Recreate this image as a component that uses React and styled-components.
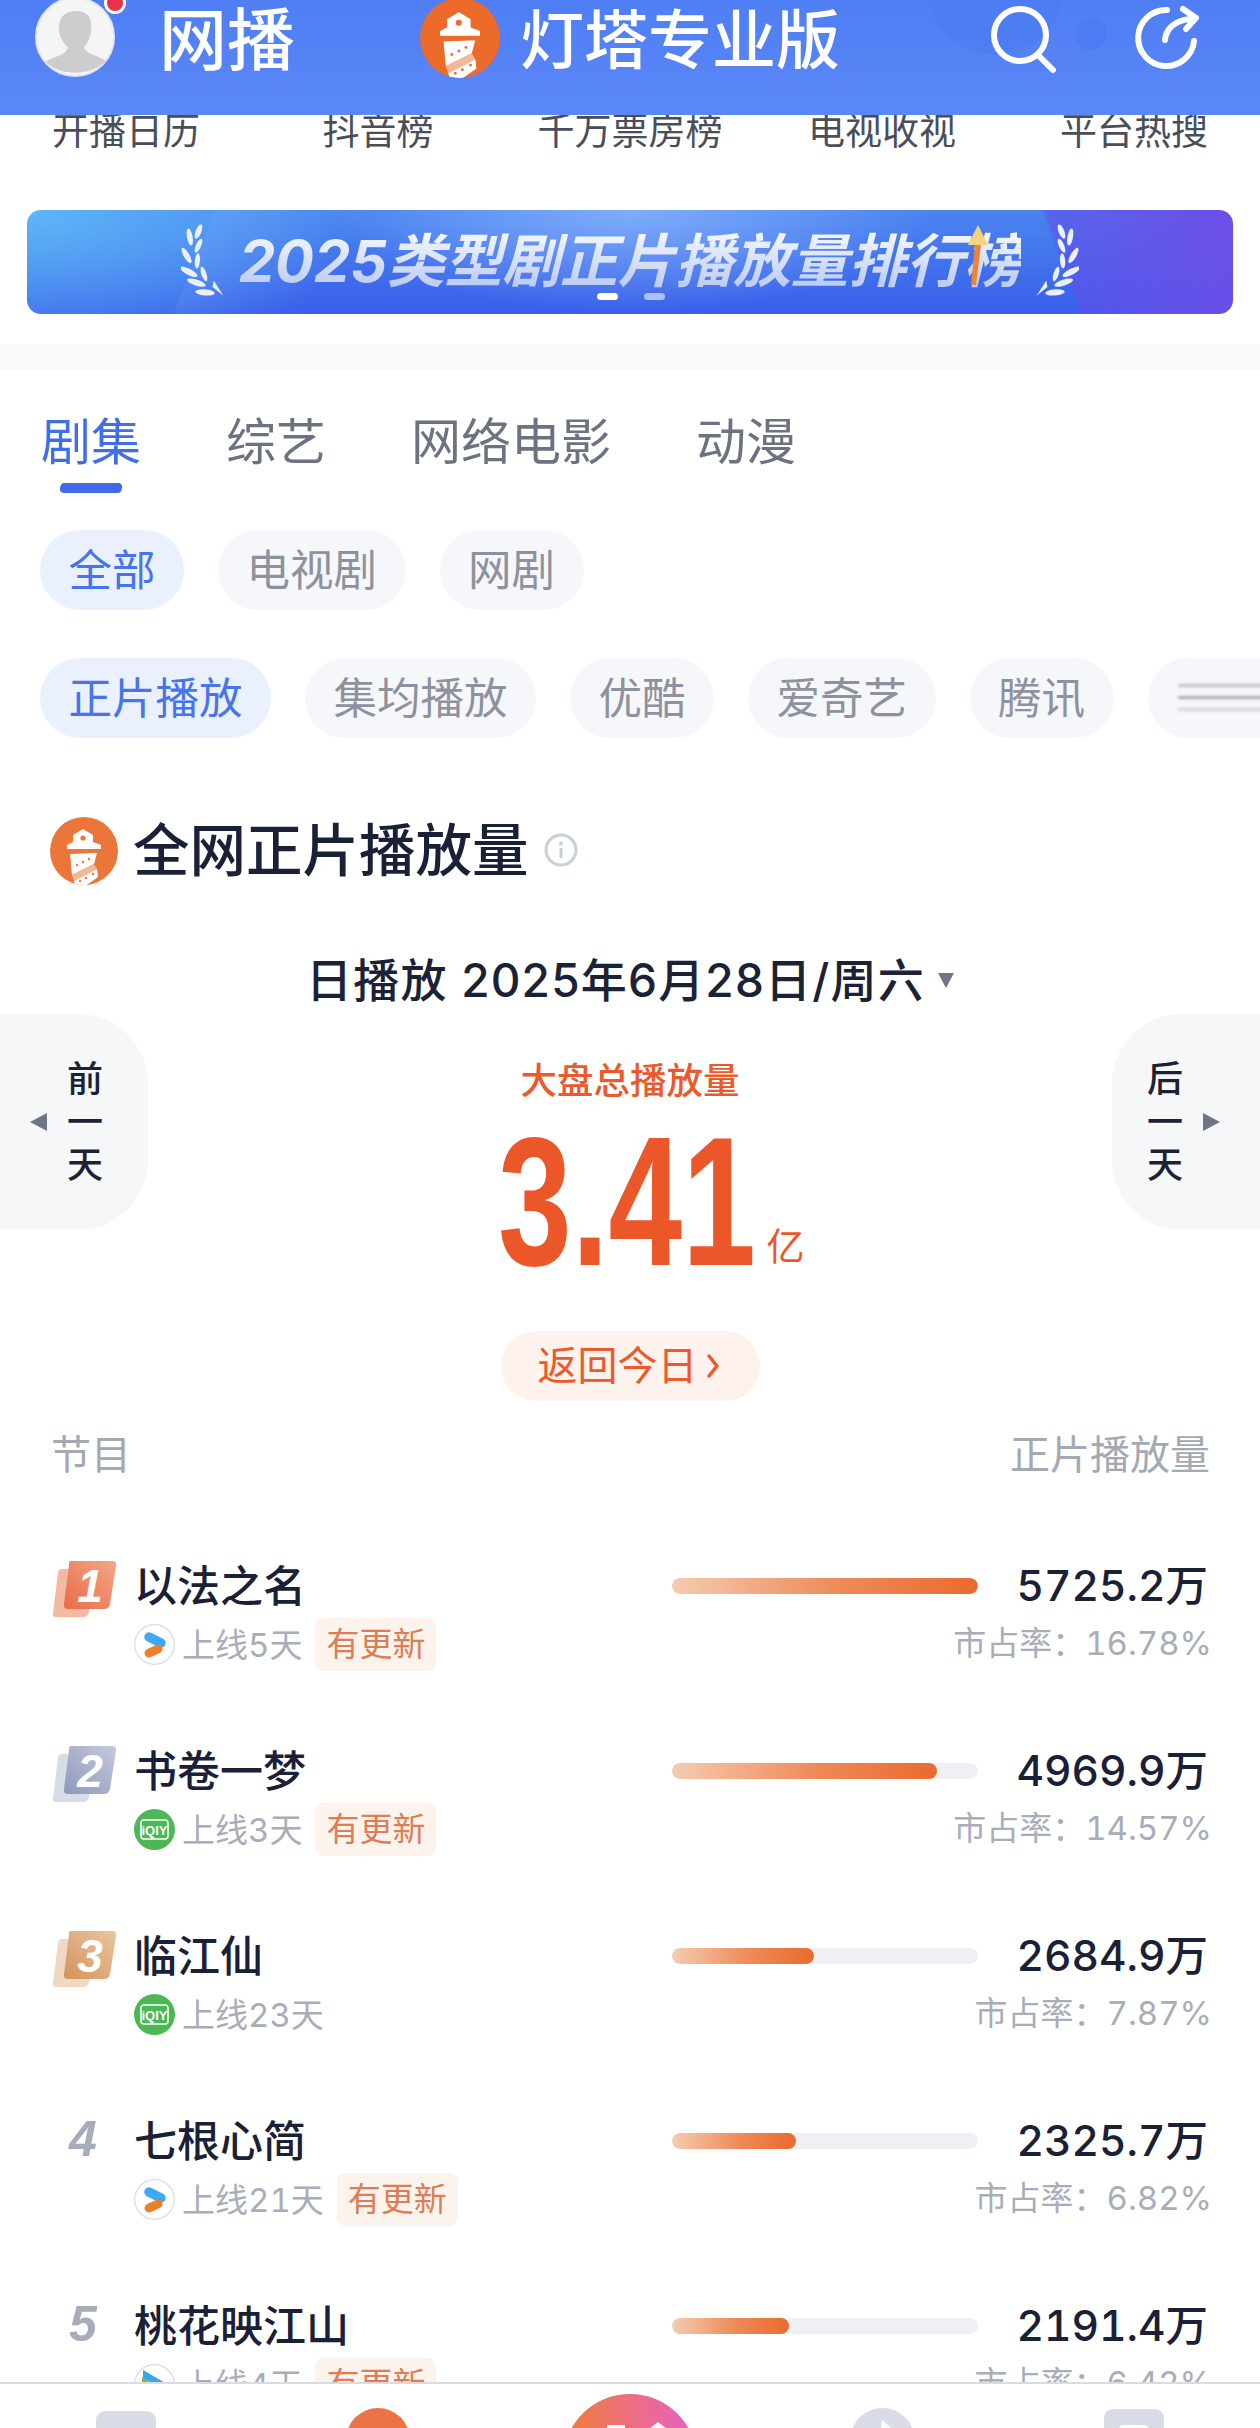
import React from "react"
import styled, { createGlobalStyle } from "styled-components"

const GlobalStyle = createGlobalStyle`
  html, body {
    margin: 0;
    padding: 0;
    background: #fff;
  }
  * {
    box-sizing: border-box;
  }
  body {
    font-family: Inter, "Noto Sans CJK SC", "Noto Sans", sans-serif;
  }
`

const Page = styled.div`
  width: 1260px;
  height: 2428px;
  display: flex;
  flex-direction: column;
  overflow: hidden;
  background: #fff;
`
const Content = styled.main`
  flex: 1;
  min-height: 0;
  overflow: hidden;
`

/************* Header */
const Header = styled.header`
  position: relative;
  flex: none;
  height: 115px;
  display: flex;
  align-items: flex-start;
  overflow: hidden;
  background: linear-gradient(180deg, #4f7ef4 0%, #5b88f7 100%);
  &::before {
    content: "";
    position: absolute;
    left: 930px;
    top: -60px;
    width: 130px;
    height: 115px;
    border-radius: 50%;
    background: rgba(74, 122, 242, 0.5);
  }
  &::after {
    content: "";
    position: absolute;
    left: 1075px;
    top: 18px;
    width: 32px;
    height: 32px;
    border-radius: 50%;
    background: rgba(74, 122, 242, 0.7);
  }
`
const Avatar = styled.div`
  position: relative;
  flex: none;
  width: 80px;
  height: 80px;
  margin: -3px 0 0 35px;
`
const RedDot = styled.span`
  position: absolute;
  top: -5px;
  right: -11px;
  width: 22px;
  height: 22px;
  border-radius: 50%;
  background: #ec2f4b;
  border: 3px solid #fff;
`
const Title = styled.h1`
  position: relative;
  margin: 6px 0 0 44px;
  font-size: 68px;
  line-height: 68px;
  font-weight: 500;
  color: #fff;
  white-space: nowrap;
`
const HeaderLogo = styled.div`
  position: relative;
  flex: none;
  width: 80px;
  height: 80px;
  margin: -2px 0 0 125px;
`
const Brand = styled.div`
  position: relative;
  margin: 6px 0 0 20px;
  font-size: 64px;
  line-height: 68px;
  font-weight: 500;
  color: #fff;
  white-space: nowrap;
`
const HeaderIcon = styled.svg`
  position: relative;
  z-index: 1;
  flex: none;
  width: 70px;
  height: 70px;
  margin: 4px 0 0 ${props => props.$left}px;
`

/************* Quick nav */
const QuickNav = styled.nav`
  display: grid;
  grid-template-columns: repeat(5, 252px);
  height: 34px;
  margin-bottom: 61px;
`
const QuickItem = styled.div`
  font-size: 37px;
  line-height: 34px;
  text-align: center;
  color: #4a4e5a;
  white-space: nowrap;
`

/************* Banner */
const Banner = styled.div`
  position: relative;
  height: 104px;
  margin: 0 27px 30px;
  border-radius: 14px;
  overflow: hidden;
  display: flex;
  align-items: center;
  justify-content: center;
  gap: 10px;
  padding-bottom: 2px;
  background:
    linear-gradient(70deg, transparent 84.5%, rgba(95, 80, 233, 0.6) 85%, #6d4de8 100%),
    linear-gradient(112deg, transparent 15%, rgba(255,255,255,0.05) 15.2%, transparent 26%),
    radial-gradient(ellipse 300px 100px at 50% 0%, rgba(150,190,255,0.7), transparent),
    radial-gradient(ellipse 340px 150px at 0% 0%, #5db6f7, transparent),
    linear-gradient(180deg, #4a85ef 0%, #3a5fea 100%);
`
const BannerText = styled.div`
  font-size: 58px;
  line-height: 70px;
  font-weight: 700;
  font-style: italic;
  letter-spacing: -0.3px;
  white-space: nowrap;
  color: transparent;
  background: linear-gradient(180deg, #f4f7ff 10%, #b9c9f2 90%);
  -webkit-background-clip: text;
  background-clip: text;
`
const Laurel = styled.svg`
  flex: none;
  width: 48px;
  height: 76px;
  margin-top: 2px;
  transform: ${props => (props.$flip ? "scaleX(-1)" : "none")};
`
const BannerArrow = styled.svg`
  position: absolute;
  left: 938px;
  top: 15px;
  width: 26px;
  height: 62px;
`
const BannerDots = styled.div`
  position: absolute;
  left: 570px;
  bottom: 14px;
  display: flex;
  gap: 26px;
`
const BannerDot = styled.span`
  width: 21px;
  height: 7px;
  border-radius: 4px;
  background: ${props => (props.$on ? "#fff" : "#a9c3f8")};
`
const GrayBand = styled.div`
  height: 26px;
  background: #f9f9fb;
`

/************* Tabs and chips */
const Tabs = styled.div`
  display: flex;
  gap: 85px;
  height: 60px;
  margin: 42px 0 58px 41px;
`
const Tab = styled.div`
  position: relative;
  font-size: 50px;
  line-height: 60px;
  color: ${props => (props.$active ? "#3f6fe8" : "#6d7280")};
  white-space: nowrap;
  ${props => props.$active && `
    &::after {
      content: "";
      position: absolute;
      left: 19px;
      top: 71px;
      width: 62px;
      height: 10px;
      border-radius: 3px 5px 3px 5px;
      background: #3f6be8;
      transform: skewX(-14deg);
    }
  `}
`
const ChipRow = styled.div`
  display: flex;
  gap: 34px;
  margin: 0 0 ${props => props.$bottom}px 40px;
  height: 81px;
  overflow: hidden;
`
const Chip = styled.div`
  flex: none;
  height: 80px;
  padding: 0 28.5px;
  border-radius: 40px;
  font-size: 43.5px;
  line-height: 80px;
  white-space: nowrap;
  color: ${props => (props.$active ? "#4674ea" : "#8e929e")};
  background: ${props => (props.$active ? "#eaf0fd" : "#f6f7fa")};
`
const SmearChip = styled.div`
  flex: none;
  width: 120px;
  height: 80px;
  padding: 26px 0 0 30px;
  border-radius: 40px 0 0 40px;
  background: #f6f7fa;
  display: flex;
  flex-direction: column;
  gap: 9px;
`
const Smear = styled.span`
  height: 3px;
  background: #9a9da6;
  filter: blur(1.5px);
  opacity: ${props => props.$fade};
`

/************* Section title */
const SectionTitle = styled.div`
  display: flex;
  align-items: center;
  height: 68px;
  margin: 0 0 73px 50px;
`
const SectionLogo = styled.div`
  flex: none;
  width: 68px;
  height: 68px;
`
const SectionText = styled.h2`
  margin: 0 15px 0 15px;
  font-size: 56.5px;
  line-height: 68px;
  font-weight: 500;
  color: #1a2035;
  white-space: nowrap;
`
const InfoIcon = styled.svg`
  width: 34px;
  height: 34px;
  margin-top: -2px;
`

/************* Date + total */
const DateLine = styled.div`
  display: flex;
  align-items: center;
  justify-content: center;
  height: 44px;
  margin-bottom: 12px;
  gap: 13px;
`
const DateText = styled.span`
  font-size: 46px;
  line-height: 44px;
  font-weight: 500;
  letter-spacing: 1.2px;
  color: #1c2236;
  white-space: nowrap;
`
const DateCaret = styled.span`
  width: 0;
  height: 0;
  border-left: 8px solid transparent;
  border-right: 8px solid transparent;
  border-top: 15px solid #6f7584;
`
const Stage = styled.div`
  display: grid;
  grid-template-columns: 148px 1fr 148px;
  height: 387px;
`
const DayButton = styled.div`
  height: 216px;
  display: flex;
  align-items: center;
  flex-direction: ${props => (props.$next ? "row" : "row-reverse")};
  justify-content: flex-start;
  gap: 20px;
  padding: ${props => (props.$next ? "0 0 0 35px" : "0 45px 0 0")};
  background: #f6f7f9;
  border-radius: ${props => (props.$next ? "70px 0 0 70px" : "0 70px 70px 0")};
`
const DayText = styled.div`
  width: 36px;
  font-size: 36px;
  line-height: 43px;
  font-weight: 500;
  color: #1c2236;
  text-align: center;
`
const DayArrow = styled.span`
  width: 0;
  height: 0;
  border-top: 9px solid transparent;
  border-bottom: 9px solid transparent;
  ${props => (props.$next ? "border-left: 17px solid #6f7584;" : "border-right: 17px solid #6f7584;")}
`
const TotalBox = styled.div`
  display: flex;
  flex-direction: column;
  align-items: center;
  padding-top: 48px;
`
const TotalLabel = styled.div`
  font-size: 36.5px;
  line-height: 38px;
  font-weight: 500;
  color: #ea5a2c;
`
const TotalValue = styled.div`
  position: relative;
  width: 245px;
  height: 132px;
  margin-top: 35px;
  margin-bottom: 1px;
  margin-left: -20px;
`
const TotalNumber = styled.div`
  font-family: "Liberation Sans", sans-serif;
  font-size: 184px;
  line-height: 132px;
  font-weight: 700;
  color: #ec572a;
  white-space: nowrap;
  transform: scaleX(0.72);
  transform-origin: left center;
`
const TotalUnit = styled.span`
  position: absolute;
  left: 269px;
  bottom: 0;
  font-size: 38px;
  line-height: 42px;
  color: #ec572a;
`
const BackToday = styled.div`
  display: flex;
  align-items: center;
  gap: 8px;
  height: 70px;
  margin-top: 63px;
  padding: 0 40px 0 37px;
  border-radius: 35px;
  font-size: 40px;
  line-height: 70px;
  color: #ea5a2c;
  background: #fdf2ec;
  white-space: nowrap;
`

/************* Table */
const TableHead = styled.div`
  display: flex;
  justify-content: space-between;
  height: 40px;
  margin-top: 34px;
  margin-bottom: 89px;
  padding: 0 50px 0 51px;
  font-size: 40px;
  line-height: 40px;
  color: #a3a8b3;
`
const Row = styled.div`
  display: grid;
  grid-template-columns: 82px 538px 306px 1fr;
  height: 185px;
  padding: 0 48px 0 52px;
`
const RankBadge = styled.svg`
  width: 66px;
  height: 58px;
  margin-top: -4px;
`
const RankPlain = styled.div`
  width: 66px;
  padding-left: 17px;
  font-family: "Liberation Sans", sans-serif;
  font-size: 50px;
  line-height: 40px;
  font-weight: 700;
  font-style: italic;
  color: #a7acba;
`
const RowMain = styled.div`
  display: flex;
  flex-direction: column;
`
const RowName = styled.div`
  font-size: 43px;
  line-height: 44px;
  font-weight: 500;
  color: #1a2035;
  white-space: nowrap;
`
const RowMeta = styled.div`
  display: flex;
  align-items: center;
  height: 53px;
  margin-top: 10px;
`
const PlatformIcon = styled.svg`
  flex: none;
  width: 41px;
  height: 41px;
  margin-right: 7px;
`
const Online = styled.span`
  font-size: 33px;
  line-height: 50px;
  font-variant-numeric: tabular-nums;
  color: #a8adb9;
  white-space: nowrap;
`
const UpdateTag = styled.span`
  flex: none;
  height: 53px;
  margin-left: 13px;
  padding: 0 11px;
  border-radius: 8px;
  font-size: 33px;
  line-height: 53px;
  color: #dc7d55;
  background: #fdf3ed;
  white-space: nowrap;
`
const BarCell = styled.div`
  display: flex;
  align-items: center;
  height: 44px;
`
const Track = styled.div`
  width: 306px;
  height: 16px;
  border-radius: 8px;
  overflow: hidden;
  background: #eef0f3;
`
const Fill = styled.div`
  height: 100%;
  border-radius: 8px;
  background: linear-gradient(90deg, #f5cbb0 0%, #ee8a58 55%, #ea6a2d 100%);
`
const Stats = styled.div`
  min-width: 0;
  display: flex;
  flex-direction: column;
  align-items: flex-end;
`
const Amount = styled.div`
  padding-right: 4px;
  font-size: 42.5px;
  line-height: 44px;
  font-weight: 500;
  font-variant-numeric: tabular-nums;
  color: #1a2035;
  white-space: nowrap;
`
const Share = styled.div`
  margin-top: 10px;
  font-size: 33px;
  line-height: 50px;
  font-variant-numeric: tabular-nums;
  color: #a8adb9;
  white-space: nowrap;
`

/************* Bottom bar */
const BottomBar = styled.footer`
  flex: none;
  height: 46px;
  display: grid;
  grid-template-columns: repeat(5, 252px);
  overflow: hidden;
  background: #fff;
  border-top: 2px solid #d9dbe1;
`
const BarSlot = styled.div`
  display: flex;
  justify-content: center;
  align-items: flex-start;
  padding-top: ${props => props.$top}px;
`
const BarSquare = styled.div`
  position: relative;
  flex: none;
  width: 60px;
  height: 60px;
  border-radius: 9px;
  background: #d9dce7;
  ${props => props.$notch && `
    &::after {
      content: "";
      position: absolute;
      left: 15px;
      top: 16px;
      width: 29px;
      height: 20px;
      border-radius: 4px;
      background: #fff;
    }
  `}
`
const BarCircle = styled.div`
  flex: none;
  width: 64px;
  height: 64px;
  border-radius: 50%;
  background: #ec7347;
`
const BarCompass = styled.svg`
  flex: none;
  width: 65px;
  height: 65px;
`
const BarHub = styled.svg`
  flex: none;
  width: 134px;
  height: 134px;
`

/************* Drawn parts */
const Lighthouse = ({ color, id }) => (
  <svg viewBox="0 0 68 68" width="100%" height="100%">
    <defs>
      <clipPath id={id}>
        <circle cx="34" cy="34" r="34" />
      </clipPath>
    </defs>
    <circle cx="34" cy="34" r="34" fill={color} />
    <g clipPath={`url(#${id})`}>
      <path d="M33 12 L43 18 L43 25 L51 28 L51 32 L17 32 L17 28 L23 25 L23 18 Z" fill="#fff" />
      <circle cx="33" cy="21" r="2.6" fill={color} />
      <path d="M20 37 L47 36 L44 47 L22 58 Z" fill="#fff" />
      <path d="M22 58 L44 47 L47 52 L24 64 Z" fill="#f5b796" />
      <path d="M24 64 L47 52 L48 60 L31 72 L26 72 Z" fill="#fff" />
      <g fill={color}>
        <circle cx="27" cy="48" r="1.2" />
        <circle cx="33" cy="45" r="1.2" />
        <circle cx="39" cy="42" r="1.2" />
        <circle cx="30" cy="64" r="1.2" />
        <circle cx="36" cy="61" r="1.2" />
        <circle cx="43" cy="57" r="1.2" />
      </g>
    </g>
  </svg>
)

const AvatarArt = () => (
  <svg viewBox="0 0 80 80" width="80" height="80">
    <circle cx="40" cy="40" r="39" fill="#f5f5f6" stroke="#e4e7f0" strokeWidth="2" />
    <path
      d="M41 14 C52 14 58 20 56 34 C55 42 52 47 49 50 C50 55 56 57 66 61 C70 63 72 64 70 65 C55 79 25 79 12 66 C10 64 13 63 18 61 C26 58 32 56 33 50 C28 46 25 40 24 34 C23 20 30 14 41 14 Z"
      fill="#cdcdcf"
    />
  </svg>
)

const RANK_TONES = {
  1: { back: "#f4b9a3", from: "#ea6b45", to: "#f3a78a", id: "rankA" },
  2: { back: "#d8dce9", from: "#8e98ba", to: "#c5cadd", id: "rankB" },
  3: { back: "#f0d8c3", from: "#d5935c", to: "#e9c5a3", id: "rankC" },
}

const Rank = ({ n }) => {
  if (n > 3) return <RankPlain>{n}</RankPlain>
  const tone = RANK_TONES[n]
  return (
    <RankBadge viewBox="0 0 66 58">
      <defs>
        <linearGradient id={tone.id} x1="0" y1="1" x2="1" y2="0">
          <stop offset="0" stopColor={tone.from} />
          <stop offset="1" stopColor={tone.to} />
        </linearGradient>
      </defs>
      <path d="M10 9 H37 Q42 9 41 14 L37 52 Q36 57 31 57 H4 Q0 57 1 53 L6 13 Q6 9 10 9 Z" fill={tone.back} />
      <path d="M18 1 H60 Q65 1 64 6 L58 44 Q57 49 52 49 H16 Q11 49 12 44 L17 5 Q17 1 18 1 Z" fill={`url(#${tone.id})`} />
      <text
        x="38"
        y="42"
        textAnchor="middle"
        fontFamily="Liberation Sans, sans-serif"
        fontSize="46"
        fontWeight="700"
        fontStyle="italic"
        fill="#fff"
      >
        {n}
      </text>
    </RankBadge>
  )
}

const YoukuIcon = () => (
  <PlatformIcon viewBox="0 0 41 41">
    <circle cx="20.5" cy="20.5" r="19.8" fill="#fff" stroke="#d9dce2" strokeWidth="1.2" />
    <path d="M15 13 L27 19" stroke="#3fa9f5" strokeWidth="9.5" strokeLinecap="round" />
    <path d="M15 29 L24 25" stroke="#ee7f2a" strokeWidth="9" strokeLinecap="round" />
  </PlatformIcon>
)

const IqiyiIcon = () => (
  <PlatformIcon viewBox="0 0 41 41">
    <circle cx="20.5" cy="20.5" r="20.5" fill="#4cb755" />
    <rect x="7" y="11" width="27" height="19" rx="3" fill="none" stroke="#fff" strokeWidth="1.6" />
    <text x="20.5" y="25.5" textAnchor="middle" fontFamily="Liberation Sans, sans-serif" fontSize="13" fontWeight="700" fill="#fff">
      iQIY
    </text>
  </PlatformIcon>
)

const TencentIcon = () => (
  <PlatformIcon viewBox="0 0 41 41">
    <circle cx="20.5" cy="20.5" r="19.8" fill="#fff" stroke="#d9dce2" strokeWidth="1.2" />
    <path d="M9 6 L33 20 L9 35 Z" fill="#35a7ee" />
    <path d="M8 13 L24 24 L8 35 Z" fill="#7ac143" />
    <path d="M13 16 L23 22 L13 29 Z" fill="#f6b52c" />
  </PlatformIcon>
)

const PLATFORM = { youku: YoukuIcon, iqiyi: IqiyiIcon, tencent: TencentIcon }

const ROWS = [
  { n: 1, name: "以法之名", platform: "youku", days: "上线5天", update: true, pct: 100, amount: "5725.2万", share: "市占率：16.78%" },
  { n: 2, name: "书卷一梦", platform: "iqiyi", days: "上线3天", update: true, pct: 86.6, amount: "4969.9万", share: "市占率：14.57%" },
  { n: 3, name: "临江仙", platform: "iqiyi", days: "上线23天", update: false, pct: 46.5, amount: "2684.9万", share: "市占率：7.87%" },
  { n: 4, name: "七根心简", platform: "youku", days: "上线21天", update: true, pct: 40.6, amount: "2325.7万", share: "市占率：6.82%" },
  { n: 5, name: "桃花映江山", platform: "tencent", days: "上线4天", update: true, pct: 38.3, amount: "2191.4万", share: "市占率：6.42%" },
]

const QUICK = ["开播日历", "抖音榜", "千万票房榜", "电视收视", "平台热搜"]
const TABS = ["剧集", "综艺", "网络电影", "动漫"]
const KINDS = ["全部", "电视剧", "网剧"]
const METRICS = ["正片播放", "集均播放", "优酷", "爱奇艺", "腾讯"]

const LaurelArt = ({ flip }) => (
  <Laurel viewBox="0 0 44 70" $flip={flip}>
    <g fill="#eaf0ff">
      <ellipse cx="16" cy="7" rx="2.6" ry="7" transform="rotate(22 16 7)" />
      <ellipse cx="8" cy="12" rx="2.6" ry="8" transform="rotate(-10 8 12)" />
      <ellipse cx="16" cy="20" rx="2.4" ry="7" transform="rotate(24 16 20)" />
      <ellipse cx="5" cy="29" rx="2.6" ry="8" transform="rotate(-30 5 29)" />
      <ellipse cx="15" cy="34" rx="2.4" ry="7" transform="rotate(5 15 34)" />
      <ellipse cx="7" cy="44" rx="2.8" ry="9" transform="rotate(-62 7 44)" />
      <ellipse cx="21" cy="46" rx="2.4" ry="7" transform="rotate(-18 21 46)" />
      <ellipse cx="14" cy="54" rx="2.8" ry="9" transform="rotate(-72 14 54)" />
      <ellipse cx="22" cy="63" rx="2.8" ry="9" transform="rotate(-85 22 63)" />
      <path d="M30 52 L39 66 L29 58 Z" />
    </g>
  </Laurel>
)

export default function App() {
  return (
    <Page>
      <GlobalStyle />
      <Header>
        <Avatar>
          <AvatarArt />
          <RedDot />
        </Avatar>
        <Title>网播</Title>
        <HeaderLogo>
          <Lighthouse color="#ec6a2a" id="lhHeader" />
        </HeaderLogo>
        <Brand>灯塔专业版</Brand>
        <HeaderIcon viewBox="0 0 70 70" $left={149} fill="none" stroke="#fff" strokeWidth="6" strokeLinecap="round">
          <circle cx="31" cy="31" r="26" />
          <path d="M50 52 L64 66" />
        </HeaderIcon>
        <HeaderIcon viewBox="0 0 70 70" $left={75} fill="none" stroke="#fff" strokeWidth="6" strokeLinecap="round" strokeLinejoin="round">
          <path d="M33 6 A28 28 0 1 0 60 37" />
          <path d="M31 36 C32 25 40 17 56 15" />
          <path d="M49 5 L62 14 L52 25" />
        </HeaderIcon>
      </Header>
      <Content>
        <QuickNav>
          {QUICK.map(label => (
            <QuickItem key={label}>{label}</QuickItem>
          ))}
        </QuickNav>
        <Banner>
          <LaurelArt />
          <BannerText>2025类型剧正片播放量排行榜</BannerText>
          <LaurelArt flip />
          <BannerArrow viewBox="0 0 26 62">
            <path d="M13 0 L23 20 L3 20 Z" fill="#f6d27a" />
            <path d="M10 20 H16 L11 60 H6 Z" fill="#ee8433" />
          </BannerArrow>
          <BannerDots>
            <BannerDot $on />
            <BannerDot />
          </BannerDots>
        </Banner>
        <GrayBand />
        <Tabs>
          {TABS.map((t, i) => (
            <Tab key={t} $active={i === 0}>
              {t}
            </Tab>
          ))}
        </Tabs>
        <ChipRow $bottom={47}>
          {KINDS.map((t, i) => (
            <Chip key={t} $active={i === 0}>
              {t}
            </Chip>
          ))}
        </ChipRow>
        <ChipRow $bottom={78}>
          {METRICS.map((t, i) => (
            <Chip key={t} $active={i === 0}>
              {t}
            </Chip>
          ))}
          <SmearChip>
            <Smear $fade={0.6} />
            <Smear $fade={0.9} />
            <Smear $fade={0.4} />
          </SmearChip>
        </ChipRow>
        <SectionTitle>
          <SectionLogo>
            <Lighthouse color="#ec7639" id="lhTitle" />
          </SectionLogo>
          <SectionText>全网正片播放量</SectionText>
          <InfoIcon viewBox="0 0 34 34" fill="none">
            <circle cx="17" cy="17" r="15" stroke="#c9cfdb" strokeWidth="3" />
            <circle cx="17" cy="10.5" r="2" fill="#c9cfdb" />
            <path d="M17 15 V25" stroke="#c9cfdb" strokeWidth="3" />
          </InfoIcon>
        </SectionTitle>
        <DateLine>
          <DateText>日播放 2025年6月28日/周六</DateText>
          <DateCaret />
        </DateLine>
        <Stage>
          <DayButton>
            <DayText>
              前<br />一<br />天
            </DayText>
            <DayArrow />
          </DayButton>
          <TotalBox>
            <TotalLabel>大盘总播放量</TotalLabel>
            <TotalValue>
              <TotalNumber>3.41</TotalNumber>
              <TotalUnit>亿</TotalUnit>
            </TotalValue>
            <BackToday>
              返回今日
              <svg width="14" height="26" viewBox="0 0 14 26" fill="none" stroke="#ea5a2c" strokeWidth="3.5" strokeLinecap="round" strokeLinejoin="round">
                <path d="M3 3 L11 13 L3 23" />
              </svg>
            </BackToday>
          </TotalBox>
          <DayButton $next>
            <DayText>
              后<br />一<br />天
            </DayText>
            <DayArrow $next />
          </DayButton>
        </Stage>
        <TableHead>
          <span>节目</span>
          <span>正片播放量</span>
        </TableHead>
        {ROWS.map(row => {
          const Icon = PLATFORM[row.platform]
          return (
            <Row key={row.n}>
              <Rank n={row.n} />
              <RowMain>
                <RowName>{row.name}</RowName>
                <RowMeta>
                  <Icon />
                  <Online>{row.days}</Online>
                  {row.update && <UpdateTag>有更新</UpdateTag>}
                </RowMeta>
              </RowMain>
              <BarCell>
                <Track>
                  <Fill style={{ width: `${row.pct}%` }} />
                </Track>
              </BarCell>
              <Stats>
                <Amount>{row.amount}</Amount>
                <Share>{row.share}</Share>
              </Stats>
            </Row>
          )
        })}
      </Content>
      <BottomBar>
        <BarSlot $top={27}>
          <BarSquare />
        </BarSlot>
        <BarSlot $top={24}>
          <BarCircle />
        </BarSlot>
        <BarSlot $top={10}>
          <BarHub viewBox="0 0 134 134">
            <defs>
              <linearGradient id="hubGrad" x1="0" y1="0" x2="1" y2="0">
                <stop offset="0" stopColor="#ee7d35" />
                <stop offset="1" stopColor="#ea5fc8" />
              </linearGradient>
            </defs>
            <circle cx="67" cy="67" r="67" fill="url(#hubGrad)" />
            <path d="M44 31 H62 V50 H44 Z M95 28 L108 38 V50 H82 V38 Z" fill="#fff" />
          </BarHub>
        </BarSlot>
        <BarSlot $top={24}>
          <BarCompass viewBox="0 0 65 65">
            <circle cx="32.5" cy="32.5" r="32.5" fill="#d9dce7" />
            <path d="M32 12 L44 22 L30 24 Z" fill="#fff" />
          </BarCompass>
        </BarSlot>
        <BarSlot $top={25}>
          <BarSquare $notch />
        </BarSlot>
      </BottomBar>
    </Page>
  )
}
